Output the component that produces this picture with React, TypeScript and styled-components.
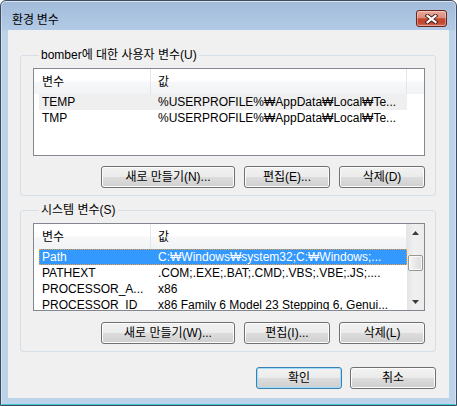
import React from 'react'
import styled, { createGlobalStyle } from 'styled-components'

const GlobalStyle = createGlobalStyle`
  html, body {
    margin: 0;
    padding: 0;
    background: #ffffff;
  }
  body {
    font-family: "Liberation Sans", "Noto Sans CJK KR", sans-serif;
    font-size: 12px;
    color: #000;
  }
  * {
    box-sizing: border-box;
  }
`

const Window = styled.div`
  width: 457px;
  height: 406px;
  border: 1px solid #3d4c5e;
  border-radius: 6px 6px 0 0;
  background: linear-gradient(to bottom, #a1bbda 0px, #b2cae5 29px, #bcd3ea 30px, #bcd3ea 100%);
  box-shadow:
    inset 0 1px 0 rgba(255, 255, 255, 0.6),
    inset 1px 0 0 rgba(255, 255, 255, 0.35),
    inset -1px 0 0 rgba(255, 255, 255, 0.35),
    inset 0 -1px 0 #3fc6d4;
  display: flex;
  flex-direction: column;
`

const TitleBar = styled.div`
  height: 29px;
  display: flex;
  align-items: flex-start;
  justify-content: space-between;
  padding: 0 9px 0 11px;
`

const Title = styled.div`
  margin-top: 11px;
  font-family: "Noto Sans CJK KR", sans-serif;
  font-size: 12px;
  line-height: 14px;
`

const CloseButton = styled.div`
  margin-top: 9px;
  width: 31px;
  height: 17px;
  border: 1px solid #6b2419;
  border-radius: 3px;
  background: linear-gradient(to bottom, #eaa99b 0%, #dc8b7b 45%, #c5472f 52%, #c04731 80%, #d6755f 100%);
  box-shadow: inset 0 0 0 1px rgba(255, 255, 255, 0.35);
  display: flex;
  align-items: center;
  justify-content: center;
`

const Client = styled.div`
  flex: 1;
  margin: 0 7px 7px;
  background: #f0f0f0;
  padding: 18px 13px 0 12px;
  display: flex;
  flex-direction: column;
`

const GroupBox = styled.fieldset<{ $gap: number }>`
  margin: ${p => p.$gap}px 0 0;
  padding: 6px 10px 7px 12px;
  border: 1px solid #d5dfe5;
  border-radius: 3px;
  min-width: 0;
`

const Legend = styled.legend`
  margin-left: 6px;
  padding: 0 2px;
  font-size: 12px;
  line-height: 14px;
`

const ListView = styled.div`
  height: 88px;
  border: 1px solid #828790;
  background: #ffffff;
  display: flex;
  overflow: hidden;
`

const ListMain = styled.div`
  flex: 1;
  min-width: 0;
  display: flex;
  flex-direction: column;
`

const Header = styled.div`
  height: 25px;
  display: flex;
  flex-shrink: 0;
  background: linear-gradient(to bottom, #ffffff 0%, #ffffff 45%, #f6f7f9 55%, #f2f3f5 100%);
`

const HeaderCell = styled.div<{ $width?: number; $first?: boolean }>`
  ${p => (p.$width ? `width: ${p.$width}px;` : 'flex: 1;')}
  flex-shrink: 0;
  padding: 2px 0 0 ${p => (p.$first ? 8 : 7)}px;
  line-height: 23px;
  border-right: ${p => (p.$width ? '1px solid #e2e6eb' : 'none')};
`

const Row = styled.div<{ $state: 'none' | 'inactive' | 'active' }>`
  margin-left: 5px;
  width: 368px;
  height: 16px;
  flex-shrink: 0;
  display: flex;
  line-height: 16px;
  white-space: nowrap;
  background: ${p => (p.$state === 'active' ? '#3399ff' : p.$state === 'inactive' ? '#efefef' : 'transparent')};
  color: ${p => (p.$state === 'active' ? '#ffffff' : '#000000')};
  outline: ${p => (p.$state === 'active' ? '1px dotted #ff9c2a' : 'none')};
  outline-offset: -1px;
`

const NameCell = styled.div`
  width: 112px;
  flex-shrink: 0;
  padding-left: 3px;
  overflow: hidden;
`

const ValueCell = styled.div`
  flex: 1;
  padding-left: 7px;
  overflow: hidden;
`

const ScrollBar = styled.div`
  width: 17px;
  flex-shrink: 0;
  display: flex;
  flex-direction: column;
  background: linear-gradient(to right, #e4e4e4, #f0f0f0 40%, #ececec);
`

const ScrollArrow = styled.div`
  height: 17px;
  display: flex;
  align-items: center;
  justify-content: center;
`

const ScrollTrack = styled.div`
  flex: 1;
  padding: 14px 1px 0;
`

const Thumb = styled.div`
  height: 16px;
  border: 1px solid #979797;
  border-radius: 2px;
  background: linear-gradient(to right, #f5f5f5, #e8e8e8 50%, #dcdcdc);
  box-shadow: inset 0 0 0 1px rgba(255, 255, 255, 0.8);
`

const ButtonRow = styled.div<{ $gap: number }>`
  margin-top: ${p => p.$gap}px;
  display: flex;
  justify-content: flex-end;
  gap: 9px;
`

const Footer = styled.div`
  margin-top: 15px;
  display: flex;
  justify-content: flex-end;
  gap: 8px;
`

const Button = styled.div<{ $width: number; $default?: boolean }>`
  width: ${p => p.$width}px;
  height: 22px;
  border: 1px solid ${p => (p.$default ? '#3c7fb1' : '#707070')};
  border-radius: 3px;
  background: linear-gradient(to bottom, #f2f2f2 0%, #ebebeb 50%, #dddddd 50%, #cfcfcf 100%);
  box-shadow: inset 0 0 0 1px ${p => (p.$default ? '#9fdcf7' : '#fcfcfc')};
  display: flex;
  align-items: center;
  justify-content: center;
  font-size: 12px;
  line-height: 14px;
  white-space: nowrap;
`

interface Variable {
  name: string
  value: string
  state?: 'none' | 'inactive' | 'active'
}

const userVars: Variable[] = [
  { name: 'TEMP', value: '%USERPROFILE%₩AppData₩Local₩Te...', state: 'inactive' },
  { name: 'TMP', value: '%USERPROFILE%₩AppData₩Local₩Te...' }
]

const systemVars: Variable[] = [
  { name: 'Path', value: 'C:₩Windows₩system32;C:₩Windows;...', state: 'active' },
  { name: 'PATHEXT', value: '.COM;.EXE;.BAT;.CMD;.VBS;.VBE;.JS;....' },
  { name: 'PROCESSOR_A...', value: 'x86' },
  { name: 'PROCESSOR_ID', value: 'x86 Family 6 Model 23 Stepping 6, Genui...' }
]

const Arrow: React.FC<{ up?: boolean }> = ({ up }) => (
  <svg width="7" height="4" viewBox="0 0 7 4">
    <path d={up ? 'M0 4 L3.5 0 L7 4 Z' : 'M0 0 L3.5 4 L7 0 Z'} fill="#3c3c3c" />
  </svg>
)

const VariableList: React.FC<{ items: Variable[]; scroll?: boolean }> = ({ items, scroll }) => (
  <ListView>
    <ListMain>
      <Header>
        <HeaderCell $width={117} $first>변수</HeaderCell>
        <HeaderCell $width={256}>값</HeaderCell>
        {!scroll && <HeaderCell />}
      </Header>
      {items.map(v => (
        <Row key={v.name} $state={v.state ?? 'none'}>
          <NameCell>{v.name}</NameCell>
          <ValueCell>{v.value}</ValueCell>
        </Row>
      ))}
    </ListMain>
    {scroll && (
      <ScrollBar>
        <ScrollArrow><Arrow up /></ScrollArrow>
        <ScrollTrack><Thumb /></ScrollTrack>
        <ScrollArrow><Arrow /></ScrollArrow>
      </ScrollBar>
    )}
  </ListView>
)

export default function App() {
  return (
    <>
      <GlobalStyle />
      <Window>
        <TitleBar>
          <Title>환경 변수</Title>
          <CloseButton>
            <svg width="13" height="10" viewBox="0 0 13 10">
              <path d="M2.5 1.8 L10.5 8.2 M10.5 1.8 L2.5 8.2" stroke="#3b150f" strokeWidth="4" strokeLinecap="square" />
              <path d="M2.5 1.8 L10.5 8.2 M10.5 1.8 L2.5 8.2" stroke="#ffffff" strokeWidth="2.2" strokeLinecap="square" />
            </svg>
          </CloseButton>
        </TitleBar>
        <Client>
          <GroupBox $gap={0}>
            <Legend>bomber에 대한 사용자 변수(U)</Legend>
            <VariableList items={userVars} />
            <ButtonRow $gap={10}>
              <Button $width={134}>새로 만들기(N)...</Button>
              <Button $width={86}>편집(E)...</Button>
              <Button $width={86}>삭제(D)</Button>
            </ButtonRow>
          </GroupBox>
          <GroupBox $gap={7}>
            <Legend>시스템 변수(S)</Legend>
            <VariableList items={systemVars} scroll />
            <ButtonRow $gap={11}>
              <Button $width={134}>새로 만들기(W)...</Button>
              <Button $width={86}>편집(I)...</Button>
              <Button $width={86}>삭제(L)</Button>
            </ButtonRow>
          </GroupBox>
          <Footer>
            <Button $width={86} $default>확인</Button>
            <Button $width={86}>취소</Button>
          </Footer>
        </Client>
      </Window>
    </>
  )
}
